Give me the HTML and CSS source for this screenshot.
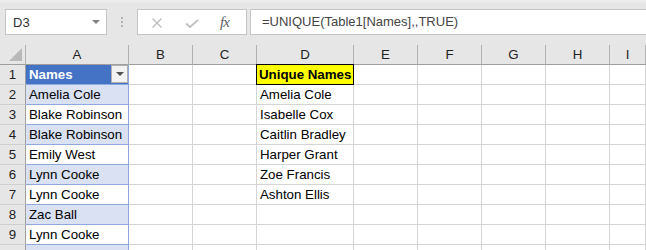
FILE: index.html
```html
<!DOCTYPE html>
<html lang="en">
<head>
<meta charset="UTF-8">
<title>UNIQUE</title>
<link rel="stylesheet" href="styles.css">
</head>
<body>
<!-- formula bar -->
<div class="formula-bar">
  <div class="name-box"><span>D3</span><span class="caret"></span></div>
  <div class="grip"><i></i><i></i><i></i></div>
  <div class="fx-box">
    <svg class="ico-x" width="12" height="10" viewBox="0 0 12 10"><path d="M1.5 0.5 L10.5 9.5 M10.5 0.5 L1.5 9.5" stroke="#bdbdbd" stroke-width="1.4" fill="none"/></svg>
    <svg class="ico-ok" width="14" height="9" viewBox="0 0 14 9"><path d="M1 4.5 L5 8 L13 1" stroke="#c4c4c4" stroke-width="2" fill="none"/></svg>
    <span class="fx"><i>f</i><i>x</i></span>
  </div>
  <div class="formula">=UNIQUE(Table1[Names],,TRUE)</div>
</div>

<!-- sheet -->
<div class="sheet">
  <div class="row head">
    <div class="corner"><svg width="13" height="13" viewBox="0 0 13 13"><polygon points="13,0 13,13 0,13" fill="#b9b9b9"/></svg></div>
    <div class="col">A</div><div class="col">B</div><div class="col">C</div><div class="col">D</div><div class="col">E</div><div class="col">F</div><div class="col">G</div><div class="col">H</div><div class="col">I</div>
  </div>
  <div class="row">
    <div class="num">1</div>
    <div class="cell t-head">Names<span class="filter"></span></div>
    <div class="cell"></div><div class="cell"></div>
    <div class="cell unique">Unique Names</div>
    <div class="cell"></div><div class="cell"></div><div class="cell"></div><div class="cell"></div><div class="cell"></div>
  </div>
  <div class="row">
    <div class="num">2</div>
    <div class="cell t-row band">Amelia Cole</div>
    <div class="cell"></div><div class="cell"></div>
    <div class="cell">Amelia Cole</div>
    <div class="cell"></div><div class="cell"></div><div class="cell"></div><div class="cell"></div><div class="cell"></div>
  </div>
  <div class="row">
    <div class="num">3</div>
    <div class="cell t-row">Blake Robinson</div>
    <div class="cell"></div><div class="cell"></div>
    <div class="cell">Isabelle Cox</div>
    <div class="cell"></div><div class="cell"></div><div class="cell"></div><div class="cell"></div><div class="cell"></div>
  </div>
  <div class="row">
    <div class="num">4</div>
    <div class="cell t-row band">Blake Robinson</div>
    <div class="cell"></div><div class="cell"></div>
    <div class="cell">Caitlin Bradley</div>
    <div class="cell"></div><div class="cell"></div><div class="cell"></div><div class="cell"></div><div class="cell"></div>
  </div>
  <div class="row">
    <div class="num">5</div>
    <div class="cell t-row">Emily West</div>
    <div class="cell"></div><div class="cell"></div>
    <div class="cell">Harper Grant</div>
    <div class="cell"></div><div class="cell"></div><div class="cell"></div><div class="cell"></div><div class="cell"></div>
  </div>
  <div class="row">
    <div class="num">6</div>
    <div class="cell t-row band">Lynn Cooke</div>
    <div class="cell"></div><div class="cell"></div>
    <div class="cell">Zoe Francis</div>
    <div class="cell"></div><div class="cell"></div><div class="cell"></div><div class="cell"></div><div class="cell"></div>
  </div>
  <div class="row">
    <div class="num">7</div>
    <div class="cell t-row">Lynn Cooke</div>
    <div class="cell"></div><div class="cell"></div>
    <div class="cell">Ashton Ellis</div>
    <div class="cell"></div><div class="cell"></div><div class="cell"></div><div class="cell"></div><div class="cell"></div>
  </div>
  <div class="row">
    <div class="num">8</div>
    <div class="cell t-row band">Zac Ball</div>
    <div class="cell"></div><div class="cell"></div><div class="cell"></div>
    <div class="cell"></div><div class="cell"></div><div class="cell"></div><div class="cell"></div><div class="cell"></div>
  </div>
  <div class="row">
    <div class="num">9</div>
    <div class="cell t-row">Lynn Cooke</div>
    <div class="cell"></div><div class="cell"></div><div class="cell"></div>
    <div class="cell"></div><div class="cell"></div><div class="cell"></div><div class="cell"></div><div class="cell"></div>
  </div>
  <div class="row last">
    <div class="num"></div>
    <div class="cell t-row band"></div>
    <div class="cell"></div><div class="cell"></div><div class="cell"></div>
    <div class="cell"></div><div class="cell"></div><div class="cell"></div><div class="cell"></div><div class="cell"></div>
  </div>
</div>
</body>
</html>
```

FILE: styles.css
```css
html, body {
margin: 0;
padding: 0;
}
body {
width: 646px;
height: 250px;
overflow: hidden;
background: #fff;
font-family: "Liberation Sans", Arial, sans-serif;
color: #000;
}

/* 公式列 */
.formula-bar {
height: 45px;
box-sizing: border-box;
padding: 9px 0 0 5px;
display: flex;
align-items: flex-start;
background: linear-gradient(180deg, #efefef 0px, #e6e6e6 4px, #e6e6e6 100%);
}
.name-box, .fx-box, .formula {
height: 26px;
box-sizing: border-box;
background: #fff;
border: 1px solid #c6c6c6;
}
.name-box {
width: 102px;
display: flex;
align-items: center;
justify-content: space-between;
padding: 1px 6px 0 7px;
font-size: 13px;
color: #333;
}
.caret {
width: 0; height: 0;
border-left: 4px solid transparent;
border-right: 4px solid transparent;
border-top: 4px solid #808080;
margin-bottom: 2px;
}
.grip {
width: 30px;
height: 26px;
display: flex;
flex-direction: column;
align-items: center;
justify-content: center;
gap: 2px;
}
.grip i {
width: 2px; height: 2px;
background: #b4b4b4;
}
.fx-box {
width: 110px;
display: flex;
align-items: center;
padding: 0 0 0 13px;
}
.ico-x { margin-top: 1px; }
.ico-ok { margin: 2px 0 0 22px; }
.fx {
margin-left: 21px;
font-family: "Liberation Serif", "Times New Roman", serif;
font-size: 15px;
color: #606060;
letter-spacing: -1px;
}
.formula {
flex: 1;
margin: 0 -2px 0 3px;
padding: 1px 0 0 11px;
font-size: 13px;
line-height: 22px;
color: #444;
}

/* 工作表 */
.row {
display: grid;
grid-template-columns: 26px 103px 64px 64px 97px 64px 64px 64px 64px 1fr;
height: 20px;
}
.row.last {
height: 5px;
}
.row > div {
box-sizing: border-box;
border-right: 1px solid #d4d4d4;
border-bottom: 1px solid #d4d4d4;
font-size: 13.3px;
line-height: 19px;
white-space: nowrap;
overflow: hidden;
}
.row.last > div {
border-bottom: none;
}
.head > div {
background: #e6e6e6;
border-right-color: #b1b1b1;
border-bottom-color: #9e9e9e;
text-align: center;
color: #222;
}
.corner {
display: flex;
align-items: flex-end;
justify-content: flex-end;
padding: 0 3px 3px 0;
}
.row > .num {
background: #e6e6e6;
border-right-color: #9e9e9e;
border-bottom-color: #cfcfcf;
text-align: center;
color: #222;
}
.cell {
padding-left: 3px;
}
.row > .t-head {
background: #4472c4;
color: #fff;
font-weight: bold;
display: flex;
border-right-color: #8ea9db;
border-bottom-color: #8ea9db;
padding-right: 0;
}
.filter {
margin-left: auto;
width: 17px;
height: 18px;
box-sizing: border-box;
background: #f2f2f2;
border: 1px solid #b0b0b0;
display: flex;
align-items: center;
justify-content: center;
}
.filter::after {
content: "";
border-left: 4px solid transparent;
border-right: 4px solid transparent;
border-top: 4px solid #505050;
}
.row > .t-row {
border-right-color: #8ea9db;
border-bottom-color: #8ea9db;
}
.row > .band {
background: #d9e1f2;
}
.row > .unique {
margin: -1px 0 0 -1px;
border: 1px solid #000;
background: #ffff00;
font-weight: bold;
padding-left: 2px;
z-index: 1;
}
```
